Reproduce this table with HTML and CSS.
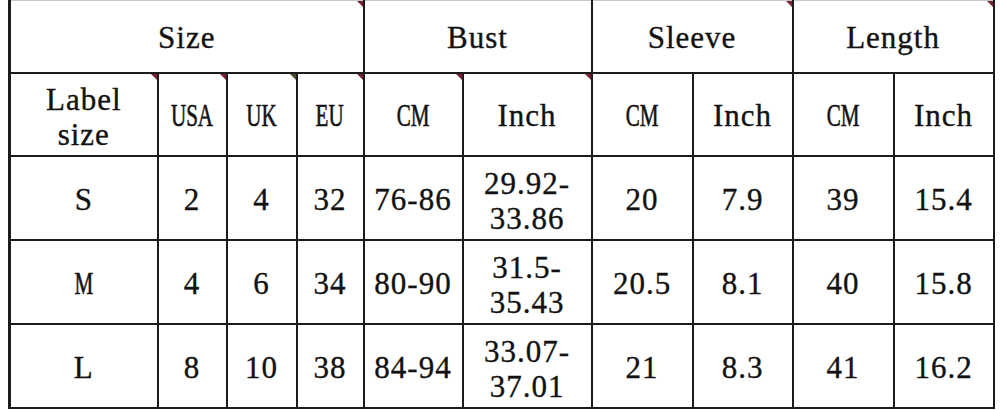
FILE: index.html
```html
<!DOCTYPE html>
<html>
<head>
<meta charset="utf-8">
<link rel="stylesheet" href="styles.css">
</head>
<body>
<table class="chart">
  <colgroup>
    <col class="w-label"><col class="w-usa"><col class="w-uk"><col class="w-eu">
    <col class="w-bcm"><col class="w-binch">
    <col class="w-scm"><col class="w-sinch">
    <col class="w-lcm"><col class="w-linch">
  </colgroup>
  <tr class="r-head">
    <td colspan="4" class="mk"><span class="t">Size</span></td>
    <td colspan="2"><span class="t">Bust</span></td>
    <td colspan="2" class="mk"><span class="t">Sleeve</span></td>
    <td colspan="2" class="mk"><span class="t">Length</span></td>
  </tr>
  <tr class="r-sub">
    <td class="mk"><span class="t two">Label<br>size</span></td>
    <td class="mk"><span class="t cond">USA</span></td>
    <td class="mk mk-g"><span class="t cond">UK</span></td>
    <td class="mk"><span class="t cond">EU</span></td>
    <td class="mk"><span class="t cond">CM</span></td>
    <td class="mk"><span class="t">Inch</span></td>
    <td><span class="t cond">CM</span></td>
    <td><span class="t">Inch</span></td>
    <td><span class="t cond">CM</span></td>
    <td><span class="t">Inch</span></td>
  </tr>
  <tr class="r-data">
    <td><span class="t">S</span></td>
    <td><span class="t">2</span></td>
    <td><span class="t">4</span></td>
    <td><span class="t">32</span></td>
    <td><span class="t">76-86</span></td>
    <td><span class="t two">29.92-<br>33.86</span></td>
    <td><span class="t">20</span></td>
    <td><span class="t">7.9</span></td>
    <td><span class="t">39</span></td>
    <td><span class="t">15.4</span></td>
  </tr>
  <tr class="r-data">
    <td><span class="t cond">M</span></td>
    <td><span class="t">4</span></td>
    <td><span class="t">6</span></td>
    <td><span class="t">34</span></td>
    <td><span class="t">80-90</span></td>
    <td><span class="t two">31.5-<br>35.43</span></td>
    <td><span class="t">20.5</span></td>
    <td><span class="t">8.1</span></td>
    <td><span class="t">40</span></td>
    <td><span class="t">15.8</span></td>
  </tr>
  <tr class="r-data">
    <td><span class="t">L</span></td>
    <td><span class="t">8</span></td>
    <td><span class="t">10</span></td>
    <td><span class="t">38</span></td>
    <td><span class="t">84-94</span></td>
    <td><span class="t two">33.07-<br>37.01</span></td>
    <td><span class="t">21</span></td>
    <td><span class="t">8.3</span></td>
    <td><span class="t">41</span></td>
    <td><span class="t">16.2</span></td>
  </tr>
</table>
</body>
</html>
```
FILE: styles.css
```css
html, body {
  margin: 0;
  padding: 0;
  background: #ffffff;
}

.chart {
  margin-left: 8px;
  border-collapse: collapse;
  table-layout: fixed;
  width: 984px;
  border-top: 1px solid #c8c8c8;
  border-left: 3px solid #1c1c1c;
  border-right: 2px solid #1c1c1c;
  border-bottom: 2px solid #1c1c1c;
  font-family: "Liberation Serif", "DejaVu Serif", serif;
  color: #121212;
}

.w-label { width: 148px; }
.w-usa { width: 69px; }
.w-uk { width: 70px; }
.w-eu { width: 67px; }
.w-bcm { width: 99px; }
.w-binch { width: 129px; }
.w-scm { width: 101px; }
.w-sinch { width: 100px; }
.w-lcm { width: 101px; }
.w-linch { width: 100px; }

.chart td {
  position: relative;
  border: 2px solid #1c1c1c;
  padding: 0;
  text-align: center;
  vertical-align: middle;
  font-size: 31px;
  line-height: 35px;
  overflow: hidden;
}

.chart .r-head td {
  border-top: 1px solid #c8c8c8;
}

.r-head { height: 72px; }
.r-sub { height: 83px; }
.r-data { height: 84px; }

.t {
  display: inline-block;
  white-space: nowrap;
  letter-spacing: 1px;
  padding-top: 3px;
  -webkit-text-stroke: 0.35px #121212;
}

.t.two {
  padding-top: 6px;
}

.t.cond {
  letter-spacing: 0;
  transform: scaleX(0.68);
  -webkit-text-stroke: 0.6px #121212;
}

.mk::after {
  content: "";
  position: absolute;
  top: 0;
  right: 0;
  width: 0;
  height: 0;
  border-style: solid;
  border-width: 0 6px 6px 0;
  border-color: transparent #7a2233 transparent transparent;
}

.mk-g::after {
  border-color: transparent #4f4a33 transparent transparent;
}
```
